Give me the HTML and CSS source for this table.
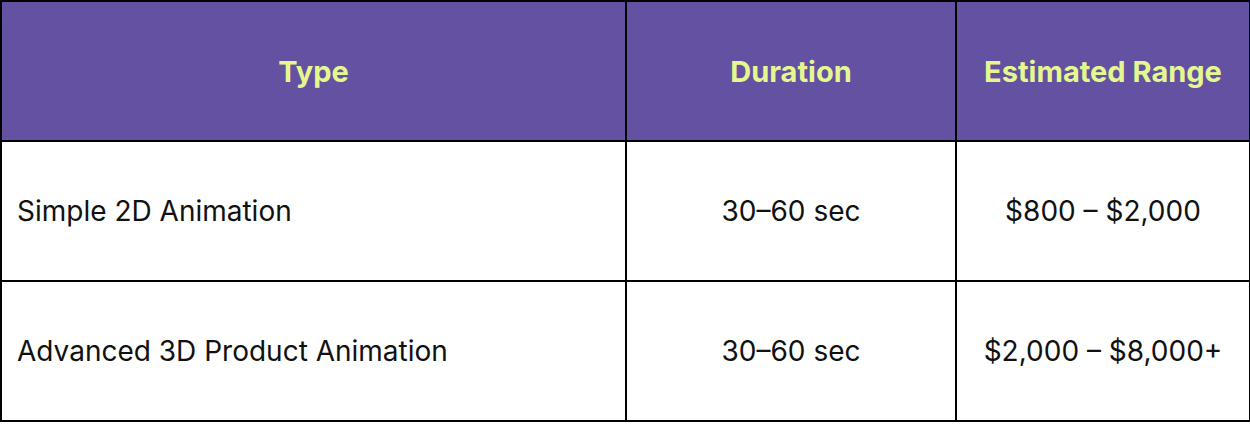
FILE: index.html
```html
<!DOCTYPE html>
<html>
<head>
<meta charset="utf-8">
<link rel="stylesheet" href="styles.css">
</head>
<body>
<table class="price-table">
  <thead>
    <tr>
      <th class="col-type">Type</th>
      <th class="col-dur">Duration</th>
      <th class="col-range">Estimated Range</th>
    </tr>
  </thead>
  <tbody>
    <tr>
      <td class="cell-left">Simple 2D Animation</td>
      <td>30–60 sec</td>
      <td>$800 – $2,000</td>
    </tr>
    <tr>
      <td class="cell-left">Advanced 3D Product Animation</td>
      <td>30–60 sec</td>
      <td>$2,000 – $8,000+</td>
    </tr>
  </tbody>
</table>
</body>
</html>
```
FILE: styles.css
```css
html, body {
  margin: 0;
  padding: 0;
  background: #ffffff;
}
.price-table {
  border-collapse: collapse;
  width: 1249px;
  font-family: Inter, "Noto Sans", sans-serif;
  font-size: 28px;
  color: #111111;
  table-layout: fixed;
}
.price-table th,
.price-table td {
  border: 2px solid #000000;
  height: 140px;
  padding: 0 15px;
  box-sizing: border-box;
  text-align: center;
  vertical-align: middle;
}
.price-table th {
  background: #6551a1;
  color: #e4f890;
  font-weight: 700;
  font-size: 29px;
}
.col-type { width: 625px; }
.col-dur { width: 330px; }
.col-range { width: 294px; }
.price-table td.cell-left {
  text-align: left;
}
```
